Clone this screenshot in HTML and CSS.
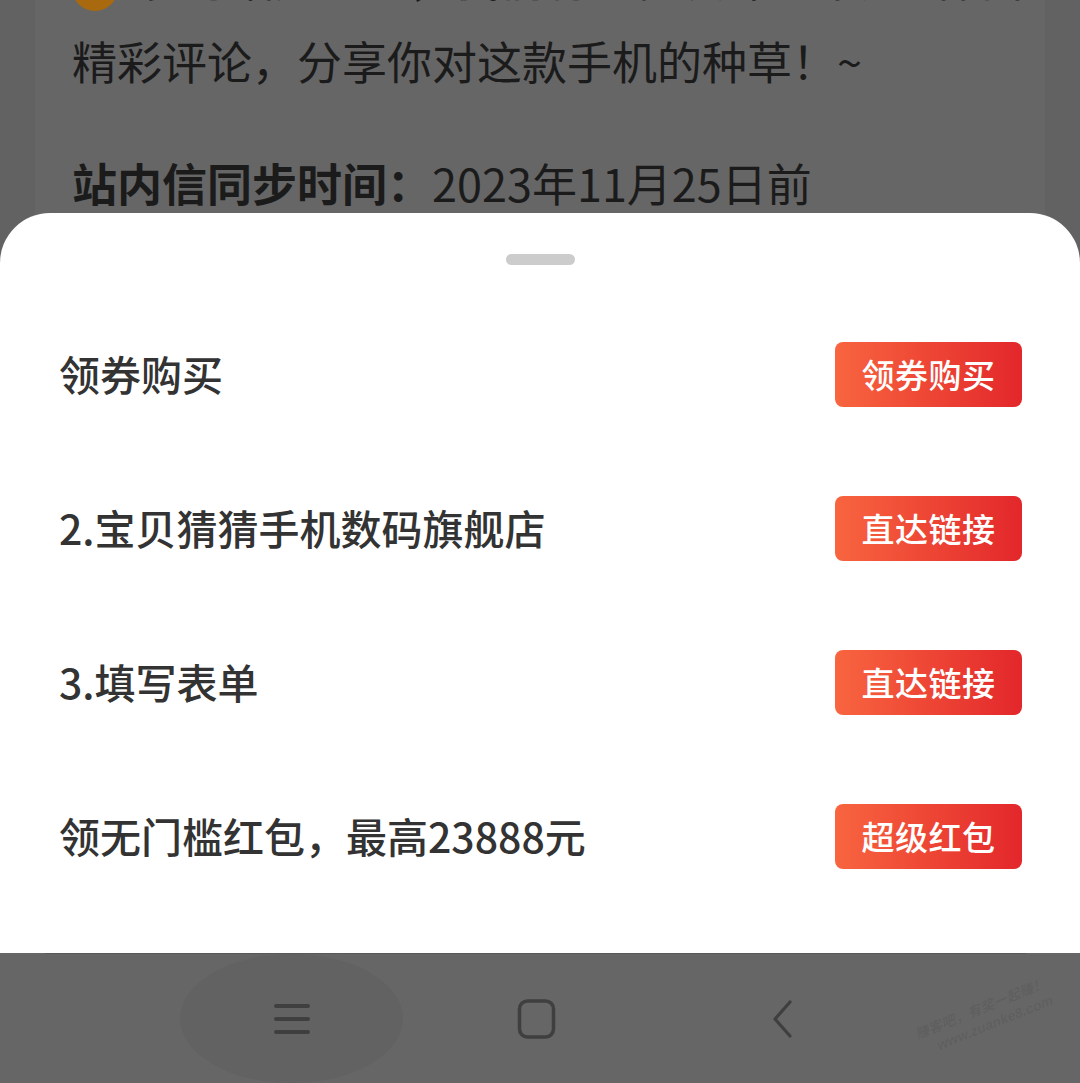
FILE: index.html
```html
<!DOCTYPE html>
<html lang="zh-CN">
<head>
<meta charset="utf-8">
<title>领券购买</title>
<link rel="stylesheet" href="styles.css">
</head>
<body>
<div class="screen">
  <div class="behind">
    <div class="card">
      <p class="line cut"><span class="emoji"></span>参与话题讨论，我们将从优质评论中选出若干条</p>
      <p class="line first">精彩评论，分享你对这款手机的种草！~</p>
      <p class="line sync"><b>站内信同步时间：</b>2023年11月25日前</p>
    </div>
  </div>
  <div class="sheet">
    <div class="handle"></div>
    <ul class="rows">
      <li class="row"><span class="label">领券购买</span><span class="btn">领券购买</span></li>
      <li class="row"><span class="label">2.宝贝猜猜手机数码旗舰店</span><span class="btn">直达链接</span></li>
      <li class="row"><span class="label">3.填写表单</span><span class="btn">直达链接</span></li>
      <li class="row"><span class="label">领无门槛红包，最高23888元</span><span class="btn">超级红包</span></li>
    </ul>
  </div>
  <div class="nav">
    <div class="nav-line"></div>
    <div class="keys">
      <div class="key key-active">
        <svg width="40" height="34" viewBox="0 0 40 34"><g stroke="#3f3f3f" stroke-width="4" stroke-linecap="round"><line x1="4" y1="4" x2="36" y2="4"/><line x1="4" y1="17" x2="36" y2="17"/><line x1="4" y1="30" x2="36" y2="30"/></g></svg>
      </div>
      <div class="key">
        <svg width="40" height="40" viewBox="0 0 40 40"><rect x="2.5" y="2" width="34" height="36" rx="8" fill="none" stroke="#3f3f3f" stroke-width="3.5"/></svg>
      </div>
      <div class="key">
        <svg width="24" height="40" viewBox="0 0 24 40"><polyline points="20,3 5,20 20,37" fill="none" stroke="#3f3f3f" stroke-width="3.2" stroke-linecap="round" stroke-linejoin="round"/></svg>
      </div>
    </div>
    <div class="watermark"><span>赚客吧，有奖一起赚！</span><span>www.zuanke8.com</span></div>
  </div>
</div>
</body>
</html>
```
FILE: styles.css
```css
* { box-sizing: border-box; }
html, body { margin: 0; padding: 0; }
body {
  width: 1080px;
  height: 1083px;
  overflow: hidden;
  font-family: "Noto Sans CJK SC", "Noto Sans", sans-serif;
}
.screen {
  width: 1080px;
  height: 1083px;
  display: flex;
  flex-direction: column;
  background: linear-gradient(90deg, #626262 0 35px, #666666 35px 1045px, #626262 1045px 1080px);
}
.behind {
  height: 213px;
  flex: none;
  overflow: hidden;
  padding: 0 35px;
}
.card {
  display: flow-root;
  height: 100%;
  padding-left: 37px;
}
.line {
  margin: 0;
  height: 76px;
  line-height: 76px;
  font-size: 45px;
  color: #1b1b1b;
  white-space: nowrap;
}
.line.cut { margin-top: -60px; }
.line.first { margin-top: 7px; }
.line.sync {
  margin-top: 59px;
  height: 50px;
  line-height: 50px;
}
.line b { font-weight: 700; }
.emoji {
  display: inline-block;
  width: 46px;
  height: 46px;
  border-radius: 50%;
  background: #a8690f;
  margin-right: 22px;
  vertical-align: -14px;
}
.sheet {
  flex: none;
  height: 740px;
  background: #ffffff;
  border-radius: 50px 50px 0 0;
  padding-top: 41px;
}
.handle {
  width: 69px;
  height: 11px;
  margin: 0 auto;
  border-radius: 6px;
  background: #cccccc;
}
.rows {
  list-style: none;
  margin: 32px 0 0;
  padding: 0 58px 0 59px;
}
.row {
  height: 154px;
  display: flex;
  align-items: center;
  justify-content: space-between;
}
.label {
  font-size: 41px;
  color: #333333;
  font-weight: 500;
  position: relative;
  top: -1px;
}
.btn {
  width: 187px;
  height: 65px;
  border-radius: 8px;
  background: linear-gradient(90deg, #f8653f, #e3272b);
  color: #ffffff;
  font-size: 33px;
  font-weight: 500;
  display: flex;
  align-items: center;
  justify-content: center;
  letter-spacing: 0.5px;
}
.nav {
  flex: 1;
  position: relative;
  background: #666666;
}
.nav-line {
  height: 1px;
  margin: 0 54px 0 45px;
  background: #595959;
}
.keys {
  display: flex;
  gap: 22px;
  padding-left: 180px;
}
.key {
  width: 223px;
  height: 129px;
  display: flex;
  align-items: center;
  justify-content: center;
  border-radius: 50%;
}
.key-active { background: #626262; }
.watermark {
  position: absolute;
  right: 26px;
  top: 46px;
  display: flex;
  flex-direction: column;
  align-items: flex-end;
  transform: rotate(-22deg);
  color: rgba(0, 0, 0, 0.07);
  font-size: 14px;
  font-style: italic;
  line-height: 18px;
  font-family: "Liberation Sans", "Noto Sans CJK SC", sans-serif;
  font-weight: 700;
}
```
